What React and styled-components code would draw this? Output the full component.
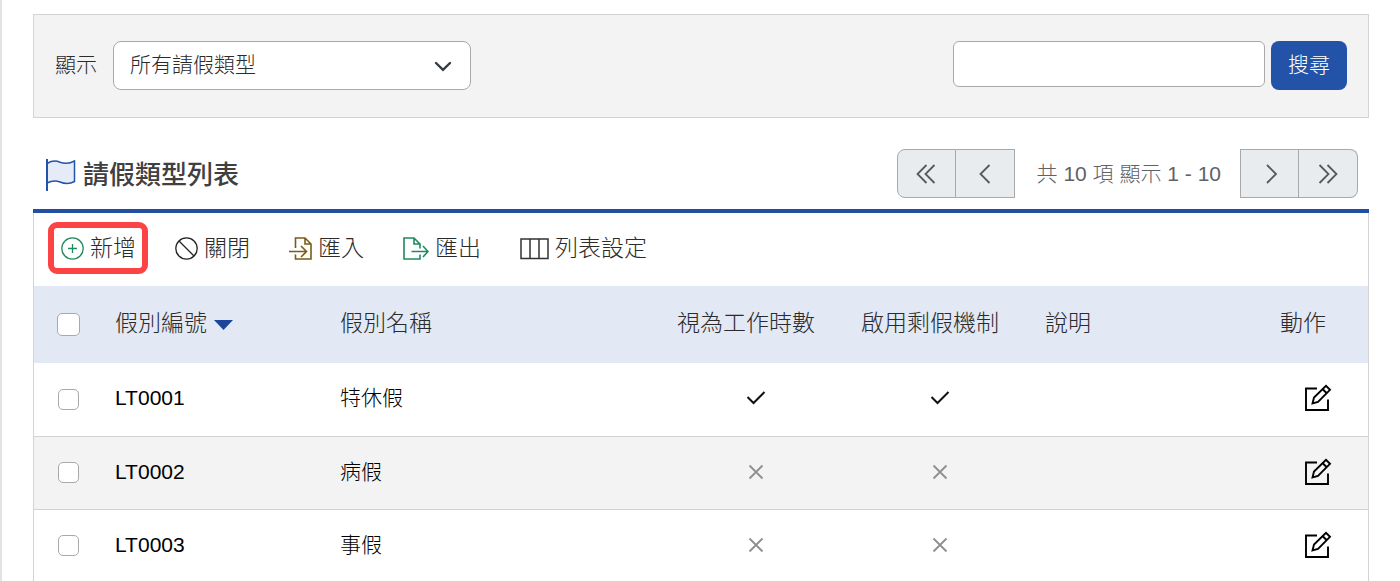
import React, { Component } from 'react';
import styled, { createGlobalStyle, css } from 'styled-components';

const GlobalStyle = createGlobalStyle`
  * {
    box-sizing: border-box;
  }
  body {
    margin: 0;
    background: #fff;
    color: #2b2b2b;
    font-family: 'Liberation Sans', 'Noto Sans CJK TC', sans-serif;
    font-size: 21px;
    font-weight: 300;
    line-height: 30px;
  }
  button, input, select {
    font: inherit;
    color: inherit;
  }
`

const AppLayout = styled.div`
  min-height: 100vh;
  padding: 14px 31px 0;
  border-left: 2px solid #e2e2e2;
`

const FilterBar = styled.form`
  display: flex;
  justify-content: space-between;
  align-items: flex-start;
  padding: 26px 21px 27px;
  border: 1px solid #d3d3d3;
  background: #f3f3f3;
`

const FilterGroup = styled.div`
  display: flex;
  align-items: center;
  gap: 16px;
`

const FilterLabel = styled.label`
  padding-bottom: 2px;
`

const SearchGroup = styled.div`
  display: flex;
  align-items: flex-start;
  gap: 6px;
`

const SelectBox = styled.div`
  display: grid;
  grid-template-columns: 358px;
  align-items: center;
  > * {
    grid-area: 1 / 1;
  }
  svg {
    justify-self: end;
    margin-right: 19px;
    pointer-events: none;
  }
`

const Select = styled.select`
  appearance: none;
  height: 49px;
  padding: 0 16px 2px;
  border: 1px solid #a9a9a9;
  border-radius: 8px;
  background: #fff;
`

const SearchInput = styled.input`
  width: 312px;
  height: 46px;
  padding: 0 12px;
  border: 1px solid #a9a9a9;
  border-radius: 6px;
  background: #fff;
`

const SearchButton = styled.button`
  width: 76px;
  height: 49px;
  padding: 0 0 2px;
  border: 0;
  border-radius: 8px;
  background: #2353a9;
  color: #fff;
  cursor: pointer;
`

const ListHeader = styled.div`
  display: flex;
  justify-content: space-between;
  align-items: center;
  padding: 31px 11px 11px;
  border-bottom: 4px solid #204fa3;
`

const Title = styled.h1`
  display: flex;
  align-items: center;
  gap: 7px;
  margin: 0;
  padding-top: 2px;
  color: #404040;
  font-size: 26px;
  font-weight: 500;
`

const Pager = styled.nav`
  display: flex;
  align-items: center;
  gap: 19px;
  color: #5e6266;
`

const PagerText = styled.span`
  padding-left: 3px;
`

const PagerGroup = styled.div`
  display: flex;
`

const PagerButton = styled.button`
  display: flex;
  align-items: center;
  justify-content: center;
  width: 59px;
  height: 49px;
  padding: 0;
  border: 1px solid #a9a9a9;
  background: #e8ecef;
  color: #55595e;
  cursor: pointer;
  &:last-child {
    border-left: 0;
  }
  ${props => props.$side === 'left' && css`
    border-radius: 8px 0 0 8px;`}
  ${props => props.$side === 'right' && css`
    border-radius: 0 8px 8px 0;`}
`

const List = styled.section`
  border: 1px solid #d3d3d3;
  border-width: 0 1px;
`

const Toolbar = styled.div`
  display: flex;
  gap: 14px;
  padding: 9px 14px 12px;
`

const ToolButton = styled.button`
  display: flex;
  align-items: center;
  gap: 6px;
  height: 52px;
  padding: 0 6px 0 7px;
  border: 6px solid ${props => props.$highlight ? '#fd4444' : 'transparent'};
  border-radius: 9px;
  background: none;
  font-size: 23px;
  cursor: pointer;
`

const Table = styled.table`
  width: 100%;
  table-layout: fixed;
  border-collapse: collapse;
`

const Col = styled.col`
  width: ${props => props.$width};
`

const HeadCell = styled.th`
  height: 77px;
  padding: 0 0 3px 13px;
  background: #e2e8f4;
  font-size: 23px;
  font-weight: 300;
  text-align: left;
  white-space: nowrap;
`

const SortLabel = styled.span`
  display: flex;
  align-items: center;
  gap: 7px;
  svg {
    margin-top: 4px;
  }
`

const Row = styled.tr`
  height: 73px;
  border-bottom: 1px solid #d3d3d3;
  background: #fff;
  color: #000;
  &:nth-child(even) {
    background: #f3f3f3;
  }
`

const Cell = styled.td`
  padding: 0 0 2px 13px;
  ${props => props.$center && css`
    padding: 0 0 2px;
    text-align: center;
    svg {
      display: block;
      margin: 0 auto;
    }`}
`

const CheckCell = styled(Cell)`
  padding: 0 0 0 24px;
`

const CheckHead = styled(HeadCell)`
  padding: 0 0 0 23px;
`

const Checkbox = styled.input`
  appearance: none;
  display: block;
  width: ${props => props.$large ? '23px' : '21px'};
  height: ${props => props.$large ? '23px' : '21px'};
  margin: 0;
  border: 1px solid #a9a9a9;
  border-radius: 5px;
  background: #fff;
  &:checked {
    background: #2353a9;
  }
`

const EditLink = styled.a`
  display: block;
  color: #000;
`

const Icon = ({ w, h, stroke = 'currentColor', sw = 1.5, children }) => (
  <svg width={w} height={h} viewBox={`0 0 ${w} ${h}`} fill="none" stroke={stroke} strokeWidth={sw} aria-hidden="true">
    {children}
  </svg>
)

const FlagIcon = () => (
  <Icon w={32} h={34} stroke="#2353a9">
    <path d="M3 5.500C8 2.500 12 2.500 16 4.200C21 6 26 5.500 30.500 3V23.500C25 26.500 21 26 16 24C12 22.500 8 22.500 3 25" fill="#e6ecf7" />
    <path d="M3 1V33" strokeWidth="2" />
  </Icon>
)

const AddIcon = () => (
  <Icon w={23} h={23} stroke="#1f8a5b" sw={1.3}>
    <circle cx="11.5" cy="11.5" r="10.7" />
    <path d="M11.500 7V16M7 11.500H16" />
  </Icon>
)

const CloseIcon = () => (
  <Icon w={23} h={23} stroke="#222" sw={1.3}>
    <circle cx="11.5" cy="11.5" r="10.7" />
    <path d="M4 4L19 19" />
  </Icon>
)

const ImportIcon = () => (
  <Icon w={23} h={23} stroke="#7a5c14" sw={1.6}>
    <path d="M6.500 11V1H16L22 7V22H6.500V17.500M16 1V7H22M0 14.500H17M12 9L17.500 14.500L12 20" />
  </Icon>
)

const ExportIcon = () => (
  <Icon w={26} h={23} stroke="#1f8a5b" sw={1.6}>
    <path d="M17 11.500V7L11 1H1V22H17V17.500M11 1V7H17M8.500 14.500H25M20 9L25 14.500L20 20" />
  </Icon>
)

const ColumnsIcon = () => (
  <Icon w={29} h={23} stroke="#333">
    <path d="M1 2H28V21.500H1ZM10 2V21.500M19 2V21.500" />
  </Icon>
)

const SortIcon = () => (
  <svg width="19" height="10" viewBox="0 0 19 10" aria-hidden="true">
    <path d="M0 0H19L9.500 10Z" fill="#1c459c" />
  </svg>
)

const Flag = ({ on, label }) => (
  <svg width="20" height="20" viewBox="0 0 20 20" fill="none" role="img" aria-label={label}>
    {on
      ? <path d="M1.500 9L7.500 15L18.500 4" stroke="#111" strokeWidth="2" />
      : <path d="M3.500 3.500L16.500 16.500M16.500 3.500L3.500 16.500" stroke="#8f8f8f" strokeWidth="1.8" />}
  </svg>
)

const EditIcon = () => (
  <Icon w={28} h={28} sw={1.9}>
    <path d="M13 4.500H2V26H24V15.500" />
    <path d="M8.500 19.500L10 13.500L22 1.800L26 5.800L14 18L8.500 19.500ZM18.500 5L22.500 9" />
  </Icon>
)

const tools = [
  { name: '新增', icon: <AddIcon />, highlight: true },
  { name: '關閉', icon: <CloseIcon /> },
  { name: '匯入', icon: <ImportIcon /> },
  { name: '匯出', icon: <ExportIcon /> },
  { name: '列表設定', icon: <ColumnsIcon /> }
]

const leaveTypes = [
  { id: 'LT0001', name: '特休假', workHours: true, balance: true },
  { id: 'LT0002', name: '病假', workHours: false, balance: false },
  { id: 'LT0003', name: '事假', workHours: false, balance: false }
]

class App extends Component {
  state = {
    keyword: '',
    selected: []
  }
  toggle = (id) => {
    const { selected } = this.state;
    this.setState({
      selected: selected.includes(id) ? selected.filter(s => s !== id) : [...selected, id]
    })
  }
  toggleAll = () => {
    const all = this.state.selected.length === leaveTypes.length;
    this.setState({ selected: all ? [] : leaveTypes.map(t => t.id) })
  }
  filterContent = () => {
    return (
      <FilterBar onSubmit={e => e.preventDefault()}>
        <FilterGroup>
          <FilterLabel htmlFor="show">顯示</FilterLabel>
          <SelectBox>
            <Select id="show">
              <option>所有請假類型</option>
            </Select>
            <Icon w={18} h={12} stroke="#343a40" sw={2.4}>
              <path d="M2 3L9 9.800L16 3" strokeLinecap="round" />
            </Icon>
          </SelectBox>
        </FilterGroup>
        <SearchGroup>
          <SearchInput
            aria-label="搜尋"
            value={this.state.keyword}
            onChange={e => this.setState({ keyword: e.target.value })}
          />
          <SearchButton>搜尋</SearchButton>
        </SearchGroup>
      </FilterBar>
    )
  }
  pagerContent = () => {
    return (
      <Pager>
        <PagerGroup>
          <PagerButton $side="left" aria-label="第一頁">
            <Icon w={20} h={20} sw={1.8}><path d="M10.500 1L1.500 10L10.500 19M18.500 1L9.500 10L18.500 19" /></Icon>
          </PagerButton>
          <PagerButton aria-label="上一頁">
            <Icon w={20} h={20} sw={1.8}><path d="M14.500 1L5.500 10L14.500 19" /></Icon>
          </PagerButton>
        </PagerGroup>
        <PagerText>共 10 項 顯示 1 - 10</PagerText>
        <PagerGroup>
          <PagerButton aria-label="下一頁">
            <Icon w={20} h={20} sw={1.8}><path d="M7 1L16 10L7 19" /></Icon>
          </PagerButton>
          <PagerButton $side="right" aria-label="最後一頁">
            <Icon w={20} h={20} sw={1.8}><path d="M1.500 1L10.500 10L1.500 19M9.500 1L18.500 10L9.500 19" /></Icon>
          </PagerButton>
        </PagerGroup>
      </Pager>
    )
  }
  tableContent = () => {
    const { selected } = this.state;
    return (
      <Table>
        <colgroup>
          <Col $width="68px" />
          <Col $width="225px" />
          <Col $width="auto" />
          <Col $width="184px" />
          <Col $width="184px" />
          <Col $width="235px" />
          <Col $width="101px" />
        </colgroup>
        <thead>
          <tr>
            <CheckHead>
              <Checkbox
                $large
                type="checkbox"
                aria-label="全選"
                checked={selected.length === leaveTypes.length}
                onChange={this.toggleAll}
              />
            </CheckHead>
            <HeadCell><SortLabel>假別編號<SortIcon /></SortLabel></HeadCell>
            <HeadCell>假別名稱</HeadCell>
            <HeadCell>視為工作時數</HeadCell>
            <HeadCell>啟用剩假機制</HeadCell>
            <HeadCell>說明</HeadCell>
            <HeadCell>動作</HeadCell>
          </tr>
        </thead>
        <tbody>
          {leaveTypes.map(type => (
            <Row key={type.id}>
              <CheckCell>
                <Checkbox
                  type="checkbox"
                  aria-label={type.id}
                  checked={selected.includes(type.id)}
                  onChange={() => this.toggle(type.id)}
                />
              </CheckCell>
              <Cell>{type.id}</Cell>
              <Cell>{type.name}</Cell>
              <Cell $center><Flag on={type.workHours} label={type.workHours ? '是' : '否'} /></Cell>
              <Cell $center><Flag on={type.balance} label={type.balance ? '是' : '否'} /></Cell>
              <Cell />
              <Cell $center>
                <EditLink href={`#${type.id}`} aria-label="編輯"><EditIcon /></EditLink>
              </Cell>
            </Row>
          ))}
        </tbody>
      </Table>
    )
  }
  render() {
    return (
      <AppLayout>
        <GlobalStyle />
        {this.filterContent()}
        <ListHeader>
          <Title><FlagIcon />請假類型列表</Title>
          {this.pagerContent()}
        </ListHeader>
        <List>
          <Toolbar>
            {tools.map(tool => (
              <ToolButton key={tool.name} $highlight={tool.highlight}>
                {tool.icon}{tool.name}
              </ToolButton>
            ))}
          </Toolbar>
          {this.tableContent()}
        </List>
      </AppLayout>
    );
  }
}

export default App;
